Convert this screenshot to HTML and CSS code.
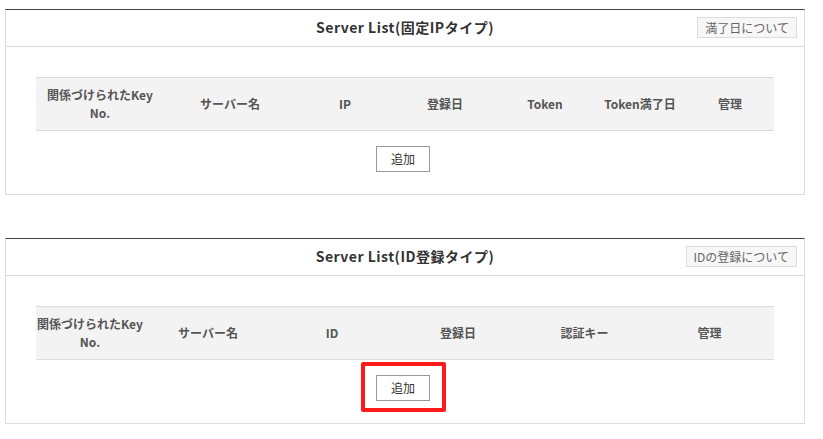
FILE: index.html
```html
<!DOCTYPE html>
<html lang="ja">
<head>
<meta charset="utf-8">
<link rel="stylesheet" href="styles.css">
</head>
<body>
<div class="page">
  <section class="panel">
    <div class="panel-head">
      <h2 class="panel-title">Server List(固定IPタイプ)</h2>
      <button class="help-btn">満了日について</button>
    </div>
    <div class="panel-body">
      <table class="list">
        <colgroup>
          <col style="width:128px"><col style="width:132px"><col style="width:98px"><col style="width:102px"><col style="width:98px"><col style="width:92px"><col style="width:88px">
        </colgroup>
        <thead>
          <tr>
            <th>関係づけられたKey<br>No.</th>
            <th>サーバー名</th>
            <th>IP</th>
            <th>登録日</th>
            <th>Token</th>
            <th>Token満了日</th>
            <th>管理</th>
          </tr>
        </thead>
      </table>
      <div class="actions">
        <button class="add-btn">追加</button>
      </div>
    </div>
  </section>

  <section class="panel">
    <div class="panel-head">
      <h2 class="panel-title">Server List(ID登録タイプ)</h2>
      <button class="help-btn">IDの登録について</button>
    </div>
    <div class="panel-body">
      <table class="list">
        <colgroup>
          <col style="width:108px"><col style="width:128px"><col style="width:120px"><col style="width:132px"><col style="width:121px"><col style="width:129px">
        </colgroup>
        <thead>
          <tr>
            <th>関係づけられたKey<br>No.</th>
            <th>サーバー名</th>
            <th>ID</th>
            <th>登録日</th>
            <th>認証キー</th>
            <th>管理</th>
          </tr>
        </thead>
      </table>
      <div class="actions">
        <span class="highlight">
          <button class="add-btn">追加</button>
        </span>
      </div>
    </div>
  </section>
</div>
</body>
</html>
```

FILE: styles.css
```css
* { box-sizing: border-box; }

html, body {
  margin: 0;
  padding: 0;
  background: #fff;
}

body {
  font-family: "Noto Sans CJK JP", "Noto Sans", sans-serif;
  color: #333;
}

.page {
  padding: 9px 0 0 5px;
  display: flex;
  flex-direction: column;
  gap: 43px;
  width: 805px;
}

.panel {
  width: 800px;
  border: 1px solid #dcdcdc;
  border-top: 1px solid #444;
  background: #fff;
}

.panel-head {
  display: grid;
  grid-template-columns: 1fr auto 1fr;
  align-items: center;
  height: 37px;
  padding: 0 7px 0 7px;
  border-bottom: 1px solid #dcdcdc;
}

.panel-title {
  grid-column: 2;
  margin: -2px 0 0;
  font-size: 14px;
  letter-spacing: 0.5px;
  font-weight: bold;
  color: #333;
  line-height: 20px;
}

.help-btn {
  grid-column: 3;
  justify-self: end;
  height: 21px;
  padding: 0 7px;
  margin-top: -2px;
  border: 1px solid #dcdcdc;
  background: #f7f7f7;
  color: #666;
  font-family: inherit;
  font-size: 12px;
  line-height: 19px;
}

.panel-body {
  padding: 30px 30px 22px;
}

.list {
  width: 738px;
  table-layout: fixed;
  border-collapse: collapse;
}

.list th {
  background: #f3f3f3;
  border-top: 1px solid #dcdcdc;
  border-bottom: 1px solid #dcdcdc;
  padding: 8px 0;
  height: 53px;
  font-size: 12px;
  font-weight: bold;
  line-height: 18px;
  color: #555;
  text-align: center;
  vertical-align: middle;
}

.actions {
  display: flex;
  justify-content: center;
  margin-top: 15px;
  padding-right: 4px;
}

.add-btn {
  width: 54px;
  height: 26px;
  padding: 0;
  border: 1px solid #999;
  background: #fff;
  color: #333;
  font-family: inherit;
  font-size: 12px;
  line-height: 24px;
}

.highlight {
  position: relative;
  display: inline-flex;
}

.highlight::after {
  content: "";
  position: absolute;
  left: -15px;
  right: -16px;
  top: -13px;
  bottom: -11px;
  border: 4px solid #ff1a1a;
  border-radius: 2px;
  pointer-events: none;
}
```
